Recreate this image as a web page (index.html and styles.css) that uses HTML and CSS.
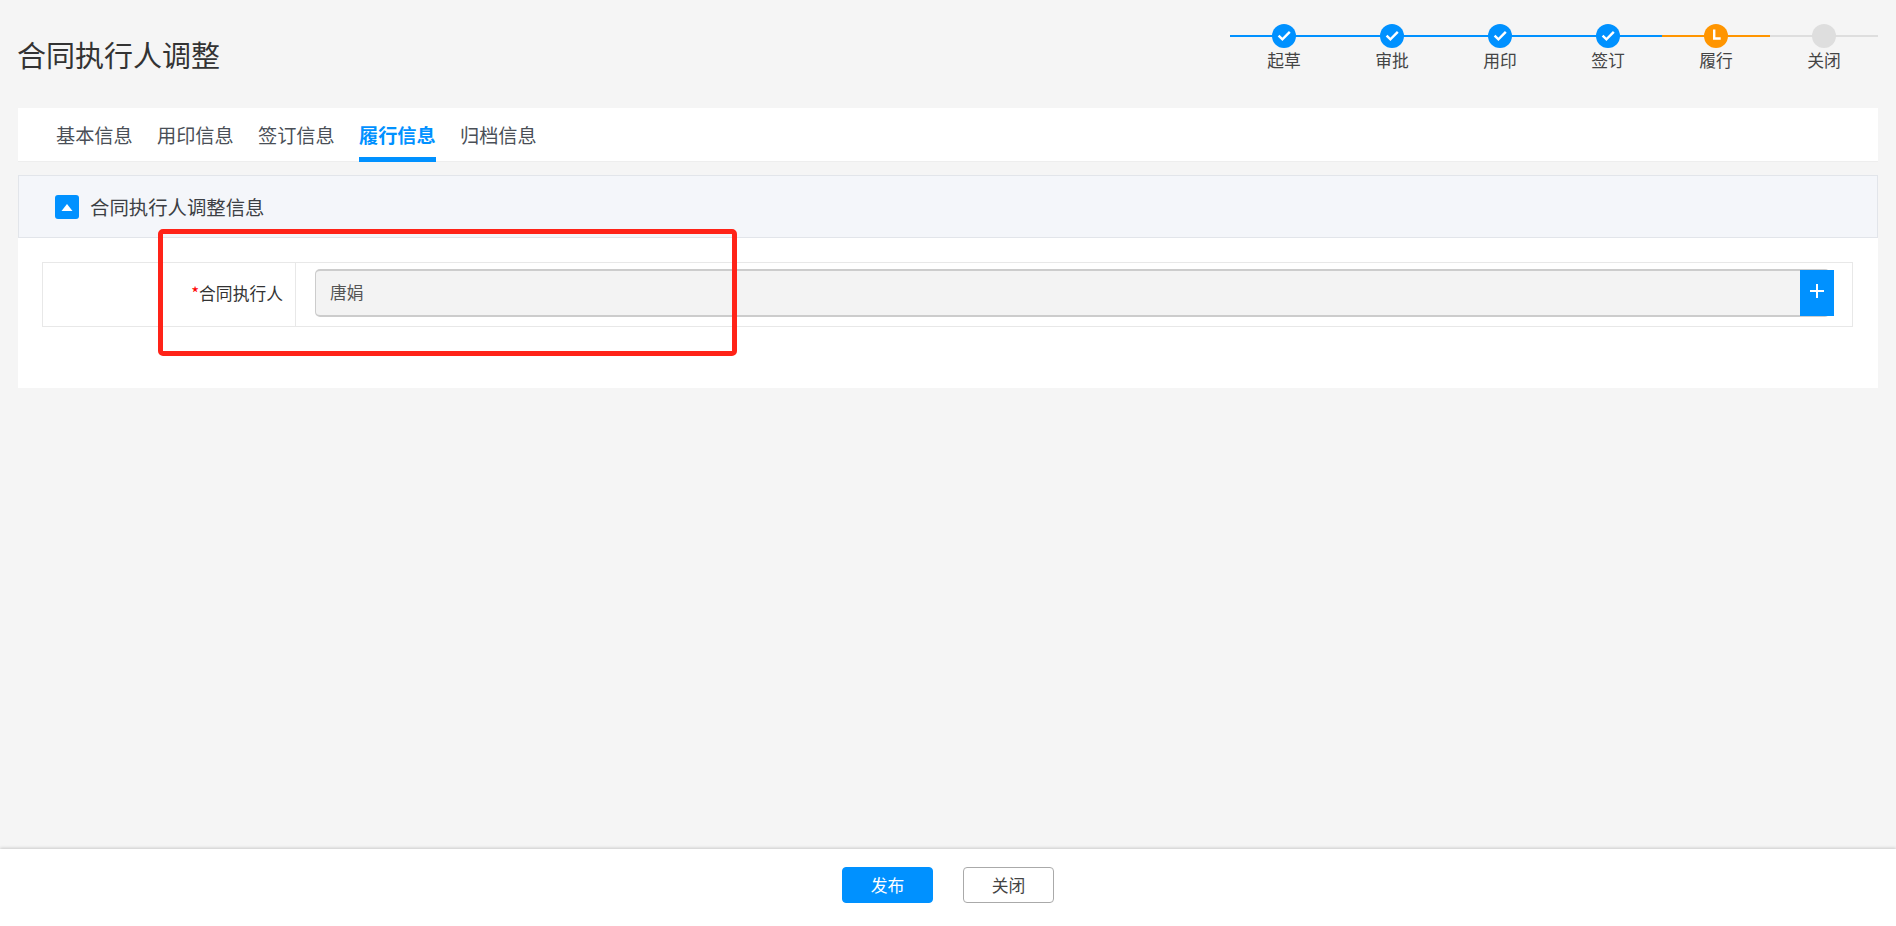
FILE: index.html
```html
<!DOCTYPE html>
<html lang="zh-CN">
<head>
<meta charset="utf-8">
<title>合同执行人调整</title>
<link rel="stylesheet" href="styles.css">
</head>
<body>
<main class="main">
  <header class="top">
    <h1 class="title">合同执行人调整</h1>
    <ol class="steps">
      <li class="step done"><span class="step-head"><span class="dot"><svg width="24" height="24" viewBox="0 0 24 24"><path class="mark" d="M6.6 11.6l3.8 3.8L17.8 7.8"/></svg></span></span><span class="step-label">起草</span></li>
      <li class="step done"><span class="step-head"><span class="dot"><svg width="24" height="24" viewBox="0 0 24 24"><path class="mark" d="M6.6 11.6l3.8 3.8L17.8 7.8"/></svg></span></span><span class="step-label">审批</span></li>
      <li class="step done"><span class="step-head"><span class="dot"><svg width="24" height="24" viewBox="0 0 24 24"><path class="mark" d="M6.6 11.6l3.8 3.8L17.8 7.8"/></svg></span></span><span class="step-label">用印</span></li>
      <li class="step done"><span class="step-head"><span class="dot"><svg width="24" height="24" viewBox="0 0 24 24"><path class="mark" d="M6.6 11.6l3.8 3.8L17.8 7.8"/></svg></span></span><span class="step-label">签订</span></li>
      <li class="step active"><span class="step-head"><span class="dot"><svg width="24" height="24" viewBox="0 0 24 24"><path class="mark" d="M10.2 5.5v9h6.5"/></svg></span></span><span class="step-label">履行</span></li>
      <li class="step todo"><span class="step-head"><span class="dot"></span></span><span class="step-label">关闭</span></li>
    </ol>
  </header>

  <nav class="tabs">
    <a class="tab">基本信息</a>
    <a class="tab">用印信息</a>
    <a class="tab">签订信息</a>
    <a class="tab tab-active">履行信息</a>
    <a class="tab">归档信息</a>
  </nav>

  <section class="panel">
    <div class="panel-head">
      <span class="toggle"><svg width="24" height="24" viewBox="0 0 24 24"><polygon points="12,9 17.5,16 6.5,16" fill="#fff"/></svg></span>
      <h2 class="panel-title">合同执行人调整信息</h2>
    </div>
    <div class="form-row">
      <label class="form-label"><span class="req">*</span>合同执行人</label>
      <div class="form-field">
        <div class="input">唐娟
          <button class="add" type="button"><svg width="14" height="14" viewBox="0 0 14 14"><path d="M7 0v14M0 7h14" stroke="#fff" stroke-width="2"/></svg></button>
        </div>
      </div>
    </div>
  </section>
  <div class="annotation"></div>
</main>
<footer class="footer">
  <button class="btn btn-primary" type="button">发布</button>
  <button class="btn btn-plain" type="button">关闭</button>
</footer>
</body>
</html>
```
FILE: styles.css
```css
* { box-sizing: border-box; }
html, body { height: 100%; }
body {
  margin: 0;
  height: 926px;
  overflow: hidden;
  display: flex;
  flex-direction: column;
  background: #f5f5f5;
  color: #333;
  font-family: "Noto Sans CJK SC", "Noto Sans", sans-serif;
}
.main {
  flex: 1;
  position: relative;
  padding: 0 18px;
}
.top {
  height: 108px;
  display: flex;
  justify-content: space-between;
  align-items: flex-start;
}
.title {
  margin: 34px 0 0 -1px;
  font-size: 29px;
  line-height: 40px;
  font-weight: 400;
  color: #333;
}
.steps {
  list-style: none;
  margin: 24px 0 0;
  padding: 0;
  width: 648px;
  display: grid;
  grid-template-columns: repeat(6, 108px);
}
.step {
  display: flex;
  flex-direction: column;
  align-items: center;
}
.step-head {
  width: 100%;
  height: 24px;
  display: flex;
  justify-content: center;
  background: linear-gradient(var(--c), var(--c)) center / 100% 2px no-repeat;
}
.done { --c: #0091ff; }
.active { --c: #ff9500; }
.todo { --c: #dedede; }
.dot {
  width: 24px;
  height: 24px;
  border-radius: 50%;
  background: var(--c);
  display: block;
}
.dot svg { display: block; }
.mark {
  fill: none;
  stroke: #fff;
  stroke-width: 2.4;
}
.step-label {
  font-size: 16.8px;
  line-height: 24px;
  color: #444;
}
.tabs {
  height: 54px;
  padding-left: 38px;
  display: flex;
  gap: 24.25px;
  background: #fff;
  border-bottom: 1px solid #eee;
}
.tab {
  height: 54px;
  font-size: 19.2px;
  line-height: 54px;
  color: #4a4f57;
}
.tab-active {
  color: #0091ff;
  font-weight: 700;
  box-shadow: inset 0 -5px 0 #0091ff;
}
.panel {
  margin-top: 13px;
  height: 213px;
  background: #fff;
}
.panel-head {
  height: 63px;
  display: flex;
  align-items: center;
  gap: 11px;
  padding-left: 36px;
  background: #f4f6fa;
  border: 1px solid #e2e5ea;
}
.toggle {
  width: 24px;
  height: 24px;
  border-radius: 3px;
  background: #0091ff;
}
.toggle svg { display: block; }
.panel-title {
  margin: 0;
  font-size: 19.4px;
  line-height: 28px;
  font-weight: 400;
  color: #3c3f44;
}
.form-row {
  margin: 24px 25px 0 24px;
  height: 65px;
  display: flex;
  border: 1px solid #e8e8e8;
}
.form-label {
  width: 253px;
  padding-right: 12px;
  display: block;
  text-align: right;
  font-size: 16.8px;
  line-height: 61px;
  color: #333;
  border-right: 1px solid #e8e8e8;
}
.req { color: #f00; }
.form-field {
  flex: 1;
  padding: 6px 22px 8px 19px;
}
.input {
  position: relative;
  height: 48px;
  padding-left: 14px;
  font-size: 16.8px;
  line-height: 42px;
  color: #555;
  background: #f3f3f3;
  border: 1px solid #ccc;
  border-top-width: 2px;
  border-bottom-width: 2px;
  border-radius: 5px;
}
.add {
  position: absolute;
  top: -1px;
  right: -5px;
  width: 34px;
  height: 46px;
  padding: 0 0 4px;
  border: 0;
  background: #0091ff;
  display: flex;
  align-items: center;
  justify-content: center;
}
.annotation {
  position: absolute;
  left: 158px;
  top: 229px;
  width: 579px;
  height: 127px;
  border: 5px solid #ff2318;
  border-radius: 5px;
}
.footer {
  height: 77px;
  display: flex;
  justify-content: center;
  align-items: flex-start;
  gap: 30px;
  padding-top: 18px;
  background: #fff;
  box-shadow: 0 -1px 3px rgba(0, 0, 0, .18);
  position: relative;
}
.btn {
  width: 91px;
  height: 36px;
  padding: 0;
  border-radius: 4px;
  font-family: inherit;
  font-size: 16.8px;
  line-height: 32px;
}
.btn-primary {
  color: #fff;
  background: #0091ff;
  border: 1px solid #0091ff;
}
.btn-plain {
  color: #444;
  background: #fff;
  border: 1px solid #aaa;
}
```
